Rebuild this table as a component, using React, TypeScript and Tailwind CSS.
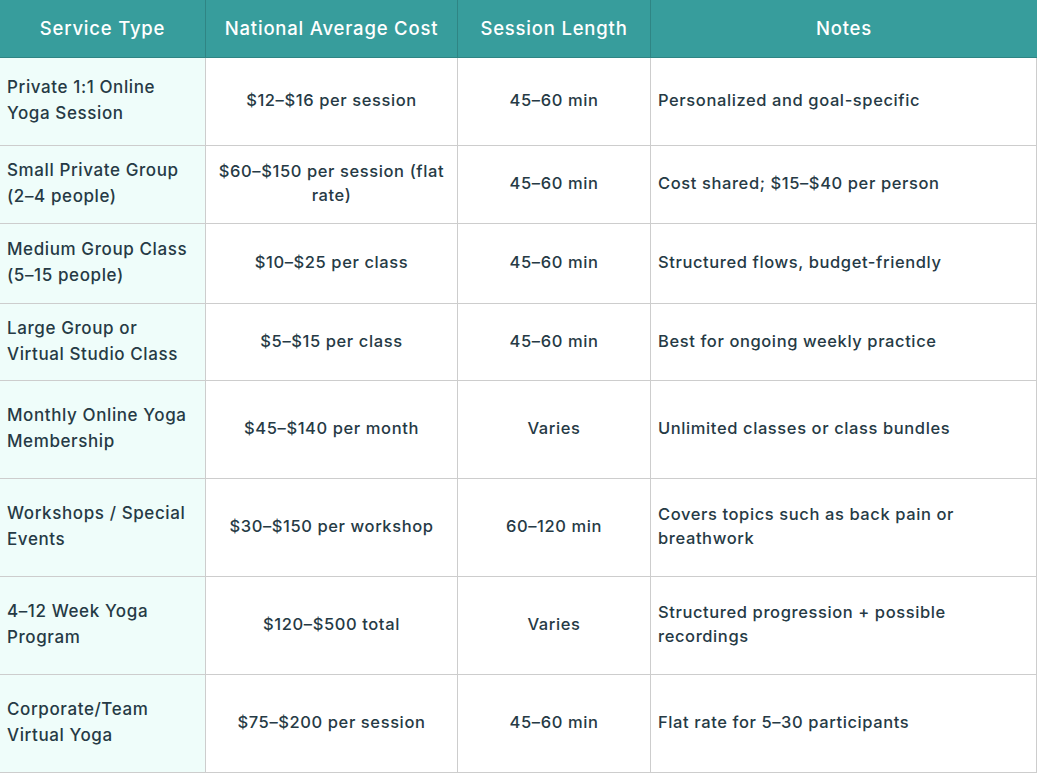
import React from "react";

const rows: [string, string, string, string][] = [
  ["Private 1:1 Online Yoga Session", "$12–$16 per session", "45–60 min", "Personalized and goal-specific"],
  ["Small Private Group (2–4 people)", "$60–$150 per session (flat rate)", "45–60 min", "Cost shared; $15–$40 per person"],
  ["Medium Group Class (5–15 people)", "$10–$25 per class", "45–60 min", "Structured flows, budget-friendly"],
  ["Large Group or Virtual Studio Class", "$5–$15 per class", "45–60 min", "Best for ongoing weekly practice"],
  ["Monthly Online Yoga Membership", "$45–$140 per month", "Varies", "Unlimited classes or class bundles"],
  ["Workshops / Special Events", "$30–$150 per workshop", "60–120 min", "Covers topics such as back pain or breathwork"],
  ["4–12 Week Yoga Program", "$120–$500 total", "Varies", "Structured progression + possible recordings"],
  ["Corporate/Team Virtual Yoga", "$75–$200 per session", "45–60 min", "Flat rate for 5–30 participants"],
];

const headers = ["Service Type", "National Average Cost", "Session Length", "Notes"];

export default function App() {
  return (
    <div
      className="w-[1037px] h-[774px] bg-white text-[#263a45]"
      style={{ fontFamily: 'Inter, "Open Sans", Arial, sans-serif' }}
    >
      <div className="grid w-[1037px] grid-cols-[206px_252px_193px_386px] grid-rows-[58px_88px_78px_80px_77px_98px_98px_98px_98px]">
        {headers.map((h, i) => (
          <div
            key={h}
            className={`flex items-center justify-center bg-[#379d9c] text-white text-[18.5px] font-medium tracking-[0.8px] border-b border-[#2f8584] ${
              i < 3 ? "border-r" : ""
            }`}
          >
            {h}
          </div>
        ))}
        {rows.map((r, ri) => (
          <React.Fragment key={ri}>
            <div className="flex items-center bg-[#effdfa] pl-[7px] pr-[8px] pb-[3px] text-[17px] font-medium tracking-[0.6px] leading-[26px] border-r border-b border-[#cdcdcd]">
              {r[0]}
            </div>
            <div className="flex items-center justify-center text-center px-3 pb-[3px] text-[16.5px] font-medium tracking-[0.6px] leading-[24px] border-r border-b border-[#cdcdcd]">
              {r[1]}
            </div>
            <div className="flex items-center justify-center text-center px-3 pb-[3px] text-[16.5px] font-medium tracking-[0.6px] leading-[24px] border-r border-b border-[#cdcdcd]">
              {r[2]}
            </div>
            <div className="flex items-center pl-[7px] pr-6 pb-[3px] text-[16.5px] font-medium tracking-[0.6px] leading-[24px] border-r border-b border-[#cdcdcd]">
              {r[3]}
            </div>
          </React.Fragment>
        ))}
      </div>
    </div>
  );
}
